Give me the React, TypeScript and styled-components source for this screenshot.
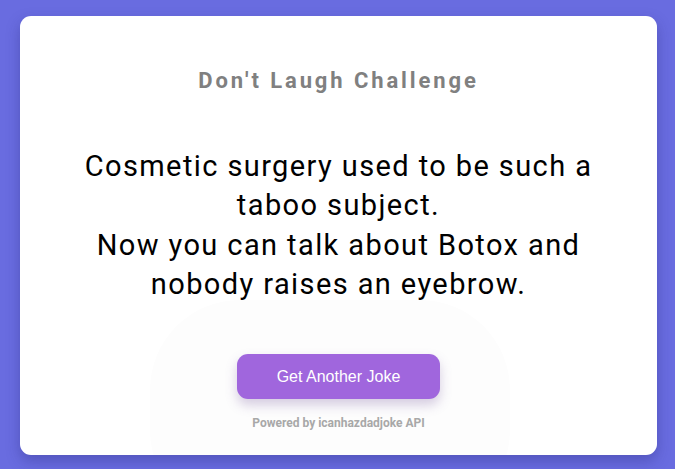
import React from "react";
import styled, { createGlobalStyle } from "styled-components";

const Global = createGlobalStyle`
  html, body { margin: 0; padding: 0; }
  body {
    background: #696ce0;
    font-family: Roboto, "Liberation Sans", sans-serif;
  }
`;

const Page = styled.div`
  width: 675px;
  height: 469px;
  box-sizing: border-box;
  padding: 16px 18px 14px 20px;
  display: flex;
`;

const Card = styled.div`
  flex: 1;
  background: #ffffff;
  border-radius: 11px;
  box-shadow: 0 6px 14px rgba(40, 40, 120, 0.35);
  display: flex;
  flex-direction: column;
  align-items: center;
  position: relative;
  overflow: hidden;
`;

const Glow = styled.div`
  position: absolute;
  left: 130px;
  width: 360px;
  top: 284px;
  height: 220px;
  border-radius: 90px;
  background: #fdfdfd;
`;

const Title = styled.h1`
  margin: 52px 0 0;
  font-family: Roboto, sans-serif;
  font-weight: 700;
  font-size: 22px;
  letter-spacing: 2.9px;
  color: #808080;
  line-height: 26px;
`;

const Joke = styled.p`
  margin: 53px 0 0;
  width: 580px;
  text-align: center;
  font-family: Roboto, sans-serif;
  font-weight: 400;
  font-size: 29px;
  line-height: 39.3px;
  color: #000000;
  letter-spacing: 1.4px;
  position: relative;
`;

const Button = styled.button`
  margin-top: 50px;
  width: 203px;
  height: 45px;
  border: none;
  border-radius: 11px;
  background: #a066dd;
  color: #ffffff;
  font-family: "Liberation Sans", Arial, sans-serif;
  font-size: 16px;
  box-shadow: 0 6px 12px rgba(120, 90, 160, 0.3);
  position: relative;
`;

const Footer = styled.div`
  margin-top: 17px;
  font-family: Roboto, sans-serif;
  font-weight: 700;
  font-size: 12px;
  color: #a8a8a8;
  position: relative;
`;

export default function App() {
  return (
    <>
      <Global />
      <Page>
        <Card>
          <Glow />
          <Title>Don't Laugh Challenge</Title>
          <Joke>
            Cosmetic surgery used to be such a taboo subject.
            <br />
            Now you can talk about Botox and nobody raises an eyebrow.
          </Joke>
          <Button>Get Another Joke</Button>
          <Footer>Powered by icanhazdadjoke API</Footer>
        </Card>
      </Page>
    </>
  );
}
